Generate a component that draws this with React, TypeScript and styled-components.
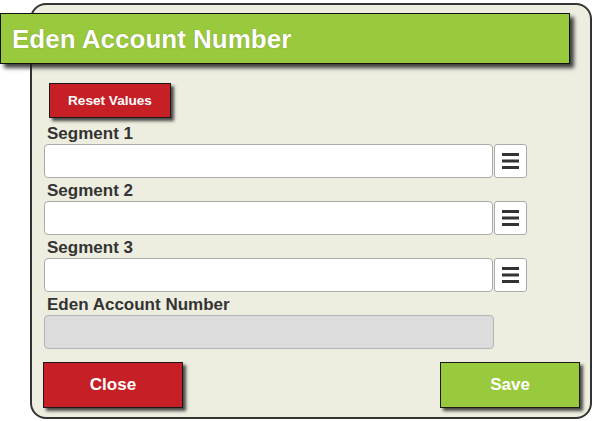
import React from "react";
import styled, { createGlobalStyle } from "styled-components";

const GlobalStyle = createGlobalStyle`
  html, body {
    margin: 0;
    padding: 0;
    background: #ffffff;
    font-family: "Liberation Sans", Arial, sans-serif;
  }
  * { box-sizing: border-box; }
`;

const Page = styled.div`
  width: 593px;
  height: 421px;
  padding: 3px 0 0 30px;
  overflow: hidden;
`;

const Panel = styled.div`
  width: 562px;
  height: 416px;
  background: #eeeee0;
  border: 2px solid #333333;
  border-radius: 16px;
  display: flex;
  flex-direction: column;
`;

const TitleBar = styled.div`
  margin: 8px 0 0 -32px;
  width: 570px;
  height: 51px;
  background: #99c93c;
  border: 1px solid #111111;
  box-shadow: 4px 4px 4px rgba(30, 30, 30, 0.85);
  display: flex;
  align-items: center;
  padding-left: 11px;
  position: relative;
  z-index: 1;
`;

const Title = styled.h1`
  margin: 0;
  color: #ffffff;
  font-size: 26px;
  font-weight: bold;
  line-height: 30px;
  text-shadow: 0 0 1px rgba(60, 60, 0, 0.5);
`;

const Body = styled.div`
  display: flex;
  flex-direction: column;
  padding: 0 0 0 12px;
`;

const Button = styled.button<{ $tone: "red" | "green" }>`
  background: ${(p) => (p.$tone === "red" ? "#c62026" : "#99c93c")};
  border: 1px solid #1a1a1a;
  box-shadow: 3px 3px 3px rgba(30, 30, 30, 0.8);
  color: #ffffff;
  font-family: "Liberation Sans", Arial, sans-serif;
  font-weight: bold;
  cursor: pointer;
  padding: 0;
`;

const ResetButton = styled(Button)`
  margin: 19px 0 0 5px;
  width: 122px;
  height: 35px;
  font-size: 13.6px;
  align-self: flex-start;
`;

const Field = styled.div<{ $first?: boolean }>`
  display: flex;
  flex-direction: column;
  margin-top: ${(p) => (p.$first ? "6px" : "3px")};
`;

const Label = styled.label`
  display: block;
  font-size: 17px;
  font-weight: bold;
  line-height: 20px;
  color: #333333;
  padding-left: 3px;
`;

const InputRow = styled.div`
  display: flex;
  gap: 1px;
`;

const TextInput = styled.input`
  width: 449px;
  height: 34px;
  border: 1px solid #aaaaaa;
  border-radius: 4px;
  background: #ffffff;
  padding: 0 8px;
  font-family: "Liberation Sans", Arial, sans-serif;
  font-size: 14px;
  outline: none;
`;

const ReadOnlyInput = styled(TextInput)`
  width: 450px;
  background: #dcdcdc;
  border-color: #b4b4b4;
`;

const MenuButton = styled.button`
  width: 33px;
  height: 34px;
  border: 1px solid #aaaaaa;
  border-radius: 3px;
  background: #ffffff;
  padding: 0;
  display: flex;
  align-items: center;
  justify-content: center;
  cursor: pointer;
`;

const Footer = styled.div`
  display: flex;
  justify-content: space-between;
  margin: 13px 10px 0 11px;
`;

const FooterButton = styled(Button)`
  width: 140px;
  height: 46px;
  font-size: 17px;
`;

const MenuIcon = () => (
  <svg width="17" height="16" viewBox="0 0 17 16" aria-hidden="true">
    <rect x="0" y="0" width="17" height="3" fill="#333333" />
    <rect x="0" y="6.5" width="17" height="3" fill="#333333" />
    <rect x="0" y="13" width="17" height="3" fill="#333333" />
  </svg>
);

const segments = ["Segment 1", "Segment 2", "Segment 3"];

export default function App() {
  return (
    <>
      <GlobalStyle />
      <Page>
        <Panel>
          <TitleBar>
            <Title>Eden Account Number</Title>
          </TitleBar>
          <Body>
            <ResetButton $tone="red">Reset Values</ResetButton>
            {segments.map((s, i) => (
              <Field key={s} $first={i === 0}>
                <Label>{s}</Label>
                <InputRow>
                  <TextInput type="text" />
                  <MenuButton aria-label="menu">
                    <MenuIcon />
                  </MenuButton>
                </InputRow>
              </Field>
            ))}
            <Field>
              <Label>Eden Account Number</Label>
              <InputRow>
                <ReadOnlyInput type="text" disabled />
              </InputRow>
            </Field>
          </Body>
          <Footer>
            <FooterButton $tone="red">Close</FooterButton>
            <FooterButton $tone="green">Save</FooterButton>
          </Footer>
        </Panel>
      </Page>
    </>
  );
}
